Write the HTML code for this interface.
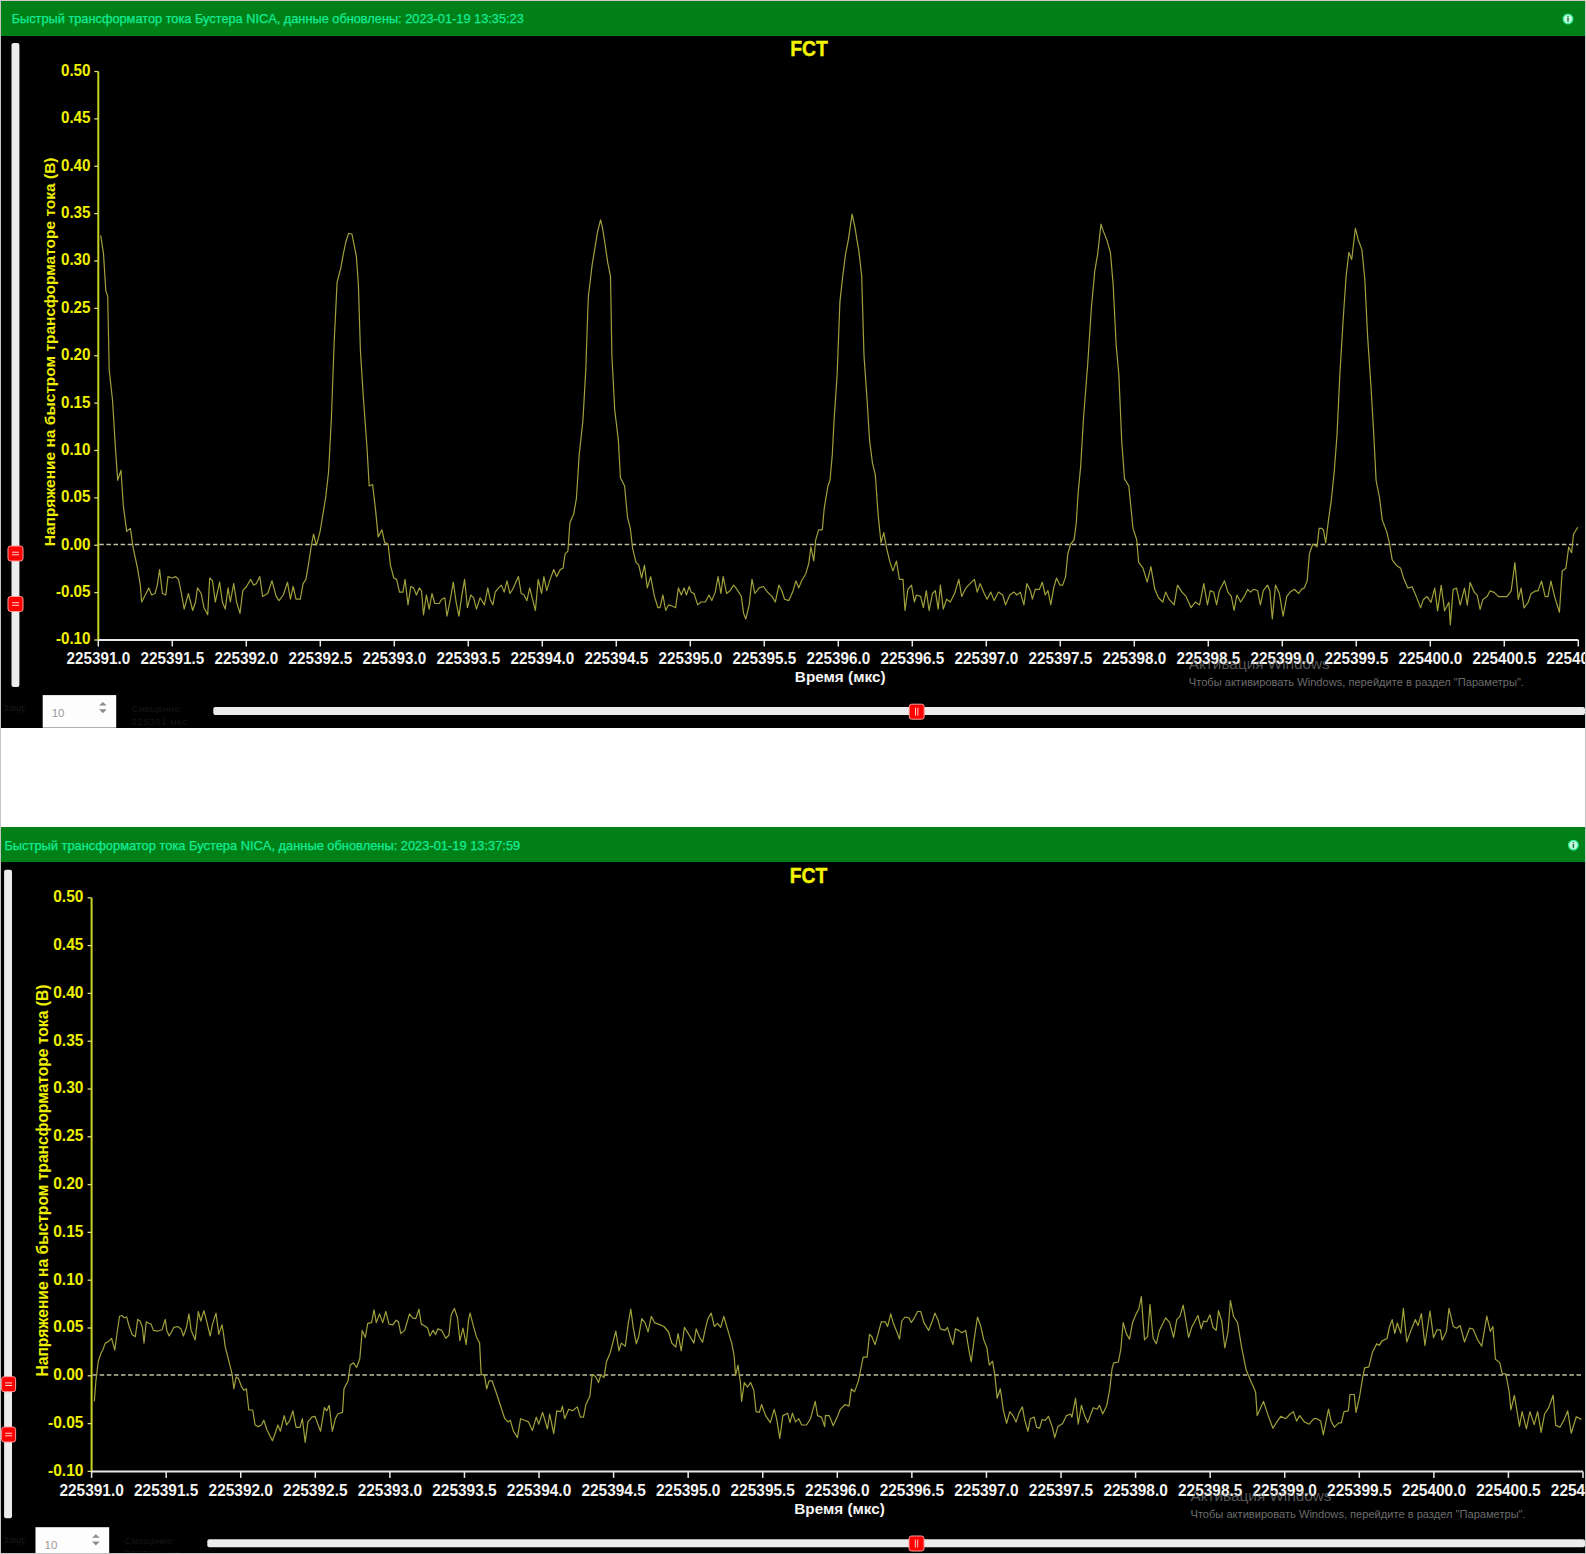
<!DOCTYPE html>
<html><head><meta charset="utf-8"><title>FCT</title>
<style>html,body{margin:0;padding:0;background:#fff;width:1586px;height:1554px;overflow:hidden}</style>
</head><body>
<svg width="1586" height="1554" viewBox="0 0 1586 1554" style="display:block">
<rect x="0" y="0" width="1586" height="1554" fill="#ffffff"/>
<defs><clipPath id="cp1"><rect x="1" y="1" width="1584" height="727"/></clipPath><clipPath id="cp2"><rect x="1" y="827" width="1584" height="726"/></clipPath></defs>
<g clip-path="url(#cp1)">
<rect x="1" y="1" width="1584" height="35" fill="#008016"/>
<rect x="1" y="36" width="1584" height="692" fill="#000"/>
<text x="11.7" y="23.1" font-family="'Liberation Sans', sans-serif" font-size="12.78" fill="#12ec96" stroke="#12ec96" stroke-width="0.25">Быстрый трансформатор тока Бустера NICA, данные обновлены: 2023-01-19 13:35:23</text>
<circle cx="1568" cy="19" r="4.8" fill="#c4ffdc" stroke="#2ef09c" stroke-width="1.3"/><circle cx="1568" cy="16.7" r="0.8" fill="#2d6a45"/><rect x="1567.25" y="17.9" width="1.5" height="3.9" fill="#2d6a45"/>
<text transform="translate(809.0,56.2) scale(0.9,1)" text-anchor="middle" font-family="'Liberation Sans', sans-serif" font-weight="bold" font-size="21.5" fill="#f4f400" stroke="#f4f400" stroke-width="0.4">FCT</text>
<rect x="11.5" y="43" width="7.899999999999999" height="644" rx="2" fill="#ececec"/>
<rect x="8.0" y="546.0" width="15.0" height="15" rx="2.5" fill="#ff0000" stroke="#ff9a9a" stroke-width="1"/>
<rect x="12.0" y="551.7" width="7" height="1" fill="#ffd0d0"/><rect x="12.0" y="554.3" width="7" height="1" fill="#ffd0d0"/>
<rect x="8.0" y="596.5" width="15.0" height="15" rx="2.5" fill="#ff0000" stroke="#ff9a9a" stroke-width="1"/>
<rect x="12.0" y="602.2" width="7" height="1" fill="#ffd0d0"/><rect x="12.0" y="604.8" width="7" height="1" fill="#ffd0d0"/>
<line x1="98.3" y1="71.5" x2="98.3" y2="640" stroke="#c8d020" stroke-width="2"/>
<line x1="94.3" y1="71.50" x2="98.3" y2="71.50" stroke="#d8dc80" stroke-width="1.3"/>
<text transform="translate(90.5,75.90) scale(0.95,1)" text-anchor="end" font-family="'Liberation Sans', sans-serif" font-weight="bold" font-size="16" fill="#eef000">0.50</text>
<line x1="94.3" y1="118.88" x2="98.3" y2="118.88" stroke="#d8dc80" stroke-width="1.3"/>
<text transform="translate(90.5,123.28) scale(0.95,1)" text-anchor="end" font-family="'Liberation Sans', sans-serif" font-weight="bold" font-size="16" fill="#eef000">0.45</text>
<line x1="94.3" y1="166.25" x2="98.3" y2="166.25" stroke="#d8dc80" stroke-width="1.3"/>
<text transform="translate(90.5,170.65) scale(0.95,1)" text-anchor="end" font-family="'Liberation Sans', sans-serif" font-weight="bold" font-size="16" fill="#eef000">0.40</text>
<line x1="94.3" y1="213.63" x2="98.3" y2="213.63" stroke="#d8dc80" stroke-width="1.3"/>
<text transform="translate(90.5,218.03) scale(0.95,1)" text-anchor="end" font-family="'Liberation Sans', sans-serif" font-weight="bold" font-size="16" fill="#eef000">0.35</text>
<line x1="94.3" y1="261.00" x2="98.3" y2="261.00" stroke="#d8dc80" stroke-width="1.3"/>
<text transform="translate(90.5,265.40) scale(0.95,1)" text-anchor="end" font-family="'Liberation Sans', sans-serif" font-weight="bold" font-size="16" fill="#eef000">0.30</text>
<line x1="94.3" y1="308.38" x2="98.3" y2="308.38" stroke="#d8dc80" stroke-width="1.3"/>
<text transform="translate(90.5,312.77) scale(0.95,1)" text-anchor="end" font-family="'Liberation Sans', sans-serif" font-weight="bold" font-size="16" fill="#eef000">0.25</text>
<line x1="94.3" y1="355.75" x2="98.3" y2="355.75" stroke="#d8dc80" stroke-width="1.3"/>
<text transform="translate(90.5,360.15) scale(0.95,1)" text-anchor="end" font-family="'Liberation Sans', sans-serif" font-weight="bold" font-size="16" fill="#eef000">0.20</text>
<line x1="94.3" y1="403.12" x2="98.3" y2="403.12" stroke="#d8dc80" stroke-width="1.3"/>
<text transform="translate(90.5,407.52) scale(0.95,1)" text-anchor="end" font-family="'Liberation Sans', sans-serif" font-weight="bold" font-size="16" fill="#eef000">0.15</text>
<line x1="94.3" y1="450.50" x2="98.3" y2="450.50" stroke="#d8dc80" stroke-width="1.3"/>
<text transform="translate(90.5,454.90) scale(0.95,1)" text-anchor="end" font-family="'Liberation Sans', sans-serif" font-weight="bold" font-size="16" fill="#eef000">0.10</text>
<line x1="94.3" y1="497.88" x2="98.3" y2="497.88" stroke="#d8dc80" stroke-width="1.3"/>
<text transform="translate(90.5,502.27) scale(0.95,1)" text-anchor="end" font-family="'Liberation Sans', sans-serif" font-weight="bold" font-size="16" fill="#eef000">0.05</text>
<line x1="94.3" y1="545.25" x2="98.3" y2="545.25" stroke="#d8dc80" stroke-width="1.3"/>
<text transform="translate(90.5,549.65) scale(0.95,1)" text-anchor="end" font-family="'Liberation Sans', sans-serif" font-weight="bold" font-size="16" fill="#eef000">0.00</text>
<line x1="94.3" y1="592.62" x2="98.3" y2="592.62" stroke="#d8dc80" stroke-width="1.3"/>
<text transform="translate(90.5,597.02) scale(0.95,1)" text-anchor="end" font-family="'Liberation Sans', sans-serif" font-weight="bold" font-size="16" fill="#eef000">-0.05</text>
<line x1="94.3" y1="640.00" x2="98.3" y2="640.00" stroke="#d8dc80" stroke-width="1.3"/>
<text transform="translate(90.5,644.40) scale(0.95,1)" text-anchor="end" font-family="'Liberation Sans', sans-serif" font-weight="bold" font-size="16" fill="#eef000">-0.10</text>
<text transform="translate(54.6,351.9) rotate(-90)" text-anchor="middle" font-family="'Liberation Sans', sans-serif" font-weight="bold" font-size="15.52" fill="#eeee00">Напряжение на быстром трансформаторе тока (В)</text>
<line x1="98.3" y1="640" x2="1578.30" y2="640" stroke="#e8e8e8" stroke-width="2"/>
<line x1="98.30" y1="640" x2="98.30" y2="646.5" stroke="#e8e8e8" stroke-width="1.5"/>
<text transform="translate(98.30,664) scale(0.955,1)" text-anchor="middle" font-family="'Liberation Sans', sans-serif" font-weight="bold" font-size="16" fill="#f4f4f4">225391.0</text>
<line x1="172.30" y1="640" x2="172.30" y2="646.5" stroke="#e8e8e8" stroke-width="1.5"/>
<text transform="translate(172.30,664) scale(0.955,1)" text-anchor="middle" font-family="'Liberation Sans', sans-serif" font-weight="bold" font-size="16" fill="#f4f4f4">225391.5</text>
<line x1="246.30" y1="640" x2="246.30" y2="646.5" stroke="#e8e8e8" stroke-width="1.5"/>
<text transform="translate(246.30,664) scale(0.955,1)" text-anchor="middle" font-family="'Liberation Sans', sans-serif" font-weight="bold" font-size="16" fill="#f4f4f4">225392.0</text>
<line x1="320.30" y1="640" x2="320.30" y2="646.5" stroke="#e8e8e8" stroke-width="1.5"/>
<text transform="translate(320.30,664) scale(0.955,1)" text-anchor="middle" font-family="'Liberation Sans', sans-serif" font-weight="bold" font-size="16" fill="#f4f4f4">225392.5</text>
<line x1="394.30" y1="640" x2="394.30" y2="646.5" stroke="#e8e8e8" stroke-width="1.5"/>
<text transform="translate(394.30,664) scale(0.955,1)" text-anchor="middle" font-family="'Liberation Sans', sans-serif" font-weight="bold" font-size="16" fill="#f4f4f4">225393.0</text>
<line x1="468.30" y1="640" x2="468.30" y2="646.5" stroke="#e8e8e8" stroke-width="1.5"/>
<text transform="translate(468.30,664) scale(0.955,1)" text-anchor="middle" font-family="'Liberation Sans', sans-serif" font-weight="bold" font-size="16" fill="#f4f4f4">225393.5</text>
<line x1="542.30" y1="640" x2="542.30" y2="646.5" stroke="#e8e8e8" stroke-width="1.5"/>
<text transform="translate(542.30,664) scale(0.955,1)" text-anchor="middle" font-family="'Liberation Sans', sans-serif" font-weight="bold" font-size="16" fill="#f4f4f4">225394.0</text>
<line x1="616.30" y1="640" x2="616.30" y2="646.5" stroke="#e8e8e8" stroke-width="1.5"/>
<text transform="translate(616.30,664) scale(0.955,1)" text-anchor="middle" font-family="'Liberation Sans', sans-serif" font-weight="bold" font-size="16" fill="#f4f4f4">225394.5</text>
<line x1="690.30" y1="640" x2="690.30" y2="646.5" stroke="#e8e8e8" stroke-width="1.5"/>
<text transform="translate(690.30,664) scale(0.955,1)" text-anchor="middle" font-family="'Liberation Sans', sans-serif" font-weight="bold" font-size="16" fill="#f4f4f4">225395.0</text>
<line x1="764.30" y1="640" x2="764.30" y2="646.5" stroke="#e8e8e8" stroke-width="1.5"/>
<text transform="translate(764.30,664) scale(0.955,1)" text-anchor="middle" font-family="'Liberation Sans', sans-serif" font-weight="bold" font-size="16" fill="#f4f4f4">225395.5</text>
<line x1="838.30" y1="640" x2="838.30" y2="646.5" stroke="#e8e8e8" stroke-width="1.5"/>
<text transform="translate(838.30,664) scale(0.955,1)" text-anchor="middle" font-family="'Liberation Sans', sans-serif" font-weight="bold" font-size="16" fill="#f4f4f4">225396.0</text>
<line x1="912.30" y1="640" x2="912.30" y2="646.5" stroke="#e8e8e8" stroke-width="1.5"/>
<text transform="translate(912.30,664) scale(0.955,1)" text-anchor="middle" font-family="'Liberation Sans', sans-serif" font-weight="bold" font-size="16" fill="#f4f4f4">225396.5</text>
<line x1="986.30" y1="640" x2="986.30" y2="646.5" stroke="#e8e8e8" stroke-width="1.5"/>
<text transform="translate(986.30,664) scale(0.955,1)" text-anchor="middle" font-family="'Liberation Sans', sans-serif" font-weight="bold" font-size="16" fill="#f4f4f4">225397.0</text>
<line x1="1060.30" y1="640" x2="1060.30" y2="646.5" stroke="#e8e8e8" stroke-width="1.5"/>
<text transform="translate(1060.30,664) scale(0.955,1)" text-anchor="middle" font-family="'Liberation Sans', sans-serif" font-weight="bold" font-size="16" fill="#f4f4f4">225397.5</text>
<line x1="1134.30" y1="640" x2="1134.30" y2="646.5" stroke="#e8e8e8" stroke-width="1.5"/>
<text transform="translate(1134.30,664) scale(0.955,1)" text-anchor="middle" font-family="'Liberation Sans', sans-serif" font-weight="bold" font-size="16" fill="#f4f4f4">225398.0</text>
<line x1="1208.30" y1="640" x2="1208.30" y2="646.5" stroke="#e8e8e8" stroke-width="1.5"/>
<text transform="translate(1208.30,664) scale(0.955,1)" text-anchor="middle" font-family="'Liberation Sans', sans-serif" font-weight="bold" font-size="16" fill="#f4f4f4">225398.5</text>
<line x1="1282.30" y1="640" x2="1282.30" y2="646.5" stroke="#e8e8e8" stroke-width="1.5"/>
<text transform="translate(1282.30,664) scale(0.955,1)" text-anchor="middle" font-family="'Liberation Sans', sans-serif" font-weight="bold" font-size="16" fill="#f4f4f4">225399.0</text>
<line x1="1356.30" y1="640" x2="1356.30" y2="646.5" stroke="#e8e8e8" stroke-width="1.5"/>
<text transform="translate(1356.30,664) scale(0.955,1)" text-anchor="middle" font-family="'Liberation Sans', sans-serif" font-weight="bold" font-size="16" fill="#f4f4f4">225399.5</text>
<line x1="1430.30" y1="640" x2="1430.30" y2="646.5" stroke="#e8e8e8" stroke-width="1.5"/>
<text transform="translate(1430.30,664) scale(0.955,1)" text-anchor="middle" font-family="'Liberation Sans', sans-serif" font-weight="bold" font-size="16" fill="#f4f4f4">225400.0</text>
<line x1="1504.30" y1="640" x2="1504.30" y2="646.5" stroke="#e8e8e8" stroke-width="1.5"/>
<text transform="translate(1504.30,664) scale(0.955,1)" text-anchor="middle" font-family="'Liberation Sans', sans-serif" font-weight="bold" font-size="16" fill="#f4f4f4">225400.5</text>
<line x1="1578.30" y1="640" x2="1578.30" y2="646.5" stroke="#e8e8e8" stroke-width="1.5"/>
<text transform="translate(1578.30,664) scale(0.955,1)" text-anchor="middle" font-family="'Liberation Sans', sans-serif" font-weight="bold" font-size="16" fill="#f4f4f4">225401.0</text>
<text x="840.2" y="681.7" text-anchor="middle" font-family="'Liberation Sans', sans-serif" font-weight="bold" font-size="15.3" fill="#f4f4f4">Время (мкс)</text>
<line x1="99.3" y1="544.5" x2="1578.30" y2="544.5" stroke="#c0c0a0" stroke-width="1.6" stroke-dasharray="4.5,2.6"/>
<polyline points="100.7,235.4 103.5,253.8 105.8,290.6 107.7,296.3 109.2,369.9 112.6,401.0 115.4,447.7 117.7,480.3 121.0,470.4 123.3,505.8 126.7,531.3 130.4,528.4 133.2,548.2 137.5,568.1 140.3,585.1 141.7,602.0 146.0,593.5 148.8,587.9 151.6,595.0 155.0,593.5 157.3,585.1 159.6,569.5 162.4,593.5 165.8,595.0 168.0,576.6 172.0,578.0 175.7,576.6 178.5,579.4 181.4,593.5 184.2,609.1 188.4,593.5 192.7,610.5 195.5,602.0 197.5,587.9 201.2,593.5 204.0,607.7 207.7,614.8 209.7,578.0 212.5,580.8 215.3,602.0 219.6,582.2 222.4,602.0 225.2,609.1 228.1,587.9 230.3,602.0 233.7,583.6 236.6,602.0 240.0,613.4 242.8,590.7 246.5,586.5 250.7,579.4 253.6,585.1 256.4,583.6 259.8,576.6 262.6,596.4 267.7,593.5 272.0,580.8 276.2,596.4 279.0,600.6 283.3,595.0 287.5,582.2 290.4,599.2 293.2,586.5 296.0,599.2 300.3,599.2 303.1,583.6 305.9,579.4 308.8,562.4 311.6,544.0 313.6,534.1 316.4,545.4 320.1,531.3 322.9,514.3 325.7,497.3 328.6,471.8 331.4,418.0 334.2,341.6 337.1,282.1 340.8,268.0 342.8,256.6 345.7,242.5 348.5,233.4 351.9,234.0 354.2,245.3 356.4,256.6 358.4,284.9 360.4,350.1 363.2,395.4 366.9,446.3 369.2,486.0 372.6,484.5 375.4,508.6 378.2,536.9 381.9,529.8 384.7,542.6 388.1,544.0 390.4,565.2 393.8,578.0 396.6,579.4 399.5,592.1 402.9,592.1 405.1,579.4 408.0,604.9 410.8,586.5 413.6,587.9 416.4,595.0 419.3,587.9 421.5,590.7 423.5,614.8 426.4,595.0 429.2,609.1 432.0,593.5 434.8,603.5 439.1,603.5 441.9,599.2 444.8,597.8 447.0,616.2 450.4,599.2 453.3,582.2 456.1,602.0 458.9,616.2 461.7,596.4 464.6,579.4 467.4,607.7 470.8,595.0 473.6,597.8 476.5,609.1 480.1,597.8 484.4,604.9 487.8,587.9 490.1,599.2 492.9,604.9 495.2,592.1 498.6,587.9 501.4,585.1 504.2,592.1 507.0,580.8 509.9,593.5 512.7,589.3 518.4,576.6 521.2,593.5 524.0,595.0 526.9,600.6 529.7,587.9 532.5,599.2 535.4,610.5 538.2,579.4 541.6,593.5 543.9,576.6 546.7,590.7 550.1,579.4 553.8,569.5 556.6,576.6 560.3,569.5 563.1,568.1 565.1,553.9 567.9,551.1 569.9,522.8 573.6,514.3 576.4,498.7 579.2,454.8 582.9,420.8 585.8,369.9 587.7,313.3 588.4,296.3 592.1,265.1 594.9,248.1 597.7,231.1 600.6,219.8 602.6,228.3 604.8,242.5 607.7,262.3 610.5,276.4 611.9,355.7 614.7,409.5 618.4,440.7 620.4,477.5 624.6,486.0 627.5,517.1 630.3,528.4 632.6,548.2 636.0,562.4 638.8,565.2 641.6,578.0 644.5,565.2 647.3,587.9 650.7,576.6 654.4,596.4 658.0,607.7 660.0,607.7 662.9,595.0 665.7,610.5 668.5,604.9 672.8,606.3 675.6,607.7 678.4,587.9 681.3,595.0 684.1,587.9 686.4,595.0 689.2,586.5 691.2,592.1 694.0,593.5 697.7,604.9 701.1,602.0 705.3,602.0 709.0,595.0 711.8,600.6 715.2,592.1 718.1,576.6 720.9,593.5 723.2,576.6 726.6,593.5 730.0,590.7 733.6,585.1 737.9,590.7 741.3,596.4 743.6,613.4 745.8,619.0 749.2,604.9 752.0,579.4 754.9,593.5 759.1,587.9 763.4,586.5 767.6,592.1 771.9,596.4 775.3,602.0 778.9,585.1 781.8,590.7 784.6,599.2 788.9,600.6 793.1,590.7 795.9,580.8 798.8,587.9 801.6,580.8 805.8,573.7 808.7,563.8 810.9,546.8 813.8,561.0 815.7,539.8 818.6,529.8 822.3,529.8 824.2,508.6 827.9,486.0 830.0,480.3 832.3,454.8 834.2,418.0 837.1,375.5 839.9,301.9 842.7,276.4 845.6,253.8 848.4,239.6 852.1,214.2 854.9,226.9 856.9,239.6 858.9,251.0 861.7,276.4 864.0,355.7 866.8,395.4 869.6,440.7 872.5,463.3 875.3,474.6 878.1,514.3 881.0,542.6 883.8,532.7 886.6,548.2 890.0,562.4 892.9,570.9 896.5,561.0 899.4,579.4 903.0,579.4 905.0,610.5 907.9,589.3 911.5,585.1 914.4,602.0 916.4,595.0 920.6,596.4 923.4,607.7 926.3,590.7 929.1,610.5 932.5,593.5 935.3,590.7 938.2,609.1 940.4,585.1 943.3,609.1 946.6,599.2 950.3,602.0 954.6,593.5 958.8,579.4 961.7,596.4 965.9,587.9 970.1,583.6 974.4,579.4 977.2,592.1 980.1,583.6 984.3,593.5 987.1,599.2 990.8,592.1 994.2,600.6 998.5,592.1 1002.7,595.0 1005.5,604.9 1009.8,595.0 1014.0,592.1 1016.9,595.0 1020.3,592.1 1023.9,604.9 1026.8,583.6 1030.5,590.7 1032.4,599.2 1035.3,589.3 1039.5,589.3 1042.3,582.2 1045.2,595.0 1048.0,590.7 1050.8,604.9 1053.7,587.9 1056.5,578.0 1059.9,585.1 1062.7,585.1 1065.6,576.6 1067.8,553.9 1070.7,544.0 1074.1,539.8 1076.3,522.8 1078.0,494.5 1080.7,466.1 1083.5,418.0 1087.7,364.2 1091.4,307.6 1094.8,270.8 1097.7,253.8 1101.0,224.1 1103.3,231.1 1106.7,239.6 1110.4,252.4 1113.2,284.9 1116.1,344.4 1118.9,375.5 1121.7,440.7 1124.5,478.9 1128.8,486.0 1133.0,528.4 1136.7,539.8 1138.7,562.4 1143.0,568.1 1147.2,582.2 1150.9,566.6 1154.8,589.3 1158.5,597.8 1162.8,602.0 1165.6,592.1 1169.0,599.2 1174.1,604.9 1177.5,585.1 1182.0,592.1 1186.0,596.4 1191.1,607.7 1195.3,602.0 1199.6,604.9 1203.8,583.6 1207.5,604.9 1210.3,590.7 1213.7,592.1 1216.6,604.9 1219.4,590.7 1224.5,580.8 1227.9,592.1 1231.3,596.4 1234.1,610.5 1236.9,595.0 1240.6,602.0 1244.3,596.4 1247.7,589.3 1250.5,592.1 1253.9,589.3 1257.6,590.7 1260.4,604.9 1263.3,590.7 1267.5,585.1 1269.8,590.7 1272.3,619.0 1275.5,585.1 1279.4,593.5 1283.1,616.2 1286.8,596.4 1290.2,592.1 1294.4,589.3 1298.7,593.5 1301.5,589.3 1304.3,587.9 1307.2,580.8 1309.4,553.9 1312.8,544.0 1317.1,546.8 1319.1,528.4 1321.9,528.4 1323.4,530.0 1325.7,542.8 1328.5,520.1 1331.3,500.3 1334.2,472.0 1337.0,435.1 1339.8,375.6 1343.2,319.0 1346.1,276.5 1348.9,252.4 1351.7,259.5 1355.4,228.3 1358.2,239.7 1361.9,249.6 1364.8,279.3 1367.6,336.0 1371.0,387.0 1373.8,435.1 1376.1,480.5 1379.5,497.5 1382.3,520.1 1386.6,531.4 1389.4,542.8 1392.2,559.8 1396.5,565.4 1400.7,568.3 1403.6,578.2 1407.8,588.1 1412.1,586.7 1416.3,596.6 1420.6,607.9 1423.4,599.4 1427.1,596.6 1431.0,602.3 1434.7,588.1 1437.6,610.8 1441.2,585.3 1444.6,610.8 1448.9,602.3 1450.3,624.9 1453.1,589.5 1456.5,588.1 1460.2,605.1 1464.5,588.1 1467.3,605.1 1470.1,582.4 1474.4,592.4 1477.2,595.2 1480.1,609.3 1482.9,599.4 1487.1,596.6 1490.0,590.9 1494.2,592.4 1498.5,596.6 1503.6,596.6 1507.0,596.6 1511.2,590.9 1514.9,562.6 1518.3,599.4 1521.1,588.1 1524.0,607.9 1528.2,602.3 1531.0,593.8 1535.3,590.9 1538.1,590.9 1541.5,581.0 1545.2,596.6 1548.0,596.6 1550.9,581.0 1554.6,596.6 1559.4,612.2 1562.2,571.1 1565.9,568.3 1568.7,547.0 1571.6,552.7 1573.5,534.3 1577.8,527.2" fill="none" stroke="#a0a03c" stroke-width="1.2" stroke-linejoin="round"/>
<text x="1188.8" y="669" font-family="'Liberation Sans', sans-serif" font-size="15.3" fill="#9a9a9a" opacity="0.55">Активация Windows</text>
<text x="1188.8" y="686" font-family="'Liberation Sans', sans-serif" font-size="11.1" fill="#9a9a9a" opacity="0.7">Чтобы активировать Windows, перейдите в раздел "Параметры".</text>
<text x="3" y="711.1" font-family="'Liberation Sans', sans-serif" font-size="9" fill="#1a1a1a">Зонд:</text>
<rect x="42.7" y="695.1" width="73.5" height="32.60000000000002" fill="#fdfdfd"/>
<text x="51.7" y="716.6" font-family="'Liberation Sans', sans-serif" font-size="11.5" fill="#9a9a9a">10</text>
<path d="M99.10000000000001,705.6 L102.9,702.1 L106.7,705.6 Z M99.10000000000001,709.3000000000001 L102.9,713.3000000000001 L106.7,709.3000000000001 Z" fill="#8a8a8a"/>
<text x="131.7" y="711.6" font-family="'Liberation Sans', sans-serif" font-size="9.5" fill="#161616">Смещение:</text>
<text x="131.7" y="724.6" font-family="'Liberation Sans', sans-serif" font-size="9.5" letter-spacing="0.6" fill="#161616">225391 мкс</text>
<rect x="213.3" y="707" width="1371.7" height="8" rx="2" fill="#ececec"/>
<rect x="909.2" y="704.2" width="15" height="15" rx="2.5" fill="#ff0000" stroke="#ff9a9a" stroke-width="1"/>
<rect x="915.0" y="707.7" width="1" height="8" fill="#ffd0d0"/><rect x="917.4000000000001" y="707.7" width="1" height="8" fill="#ffd0d0"/>
</g>
<g clip-path="url(#cp2)">
<rect x="1" y="827" width="1584" height="35" fill="#008016"/>
<rect x="1" y="862" width="1584" height="691" fill="#000"/>
<text x="4.4" y="849.8" font-family="'Liberation Sans', sans-serif" font-size="12.86" fill="#12ec96" stroke="#12ec96" stroke-width="0.25">Быстрый трансформатор тока Бустера NICA, данные обновлены: 2023-01-19 13:37:59</text>
<circle cx="1573.4" cy="845.1" r="4.8" fill="#c4ffdc" stroke="#2ef09c" stroke-width="1.3"/><circle cx="1573.4" cy="842.8000000000001" r="0.8" fill="#2d6a45"/><rect x="1572.65" y="844.0" width="1.5" height="3.9" fill="#2d6a45"/>
<text transform="translate(808.6,882.5) scale(0.9,1)" text-anchor="middle" font-family="'Liberation Sans', sans-serif" font-weight="bold" font-size="21.5" fill="#f4f400" stroke="#f4f400" stroke-width="0.4">FCT</text>
<rect x="4.1" y="869.7" width="7.9" height="648.5" rx="2" fill="#ececec"/>
<rect x="1.6" y="1376.7" width="14.000000000000002" height="15" rx="2.5" fill="#ff0000" stroke="#ff9a9a" stroke-width="1"/>
<rect x="5.100000000000001" y="1382.4" width="7" height="1" fill="#ffd0d0"/><rect x="5.100000000000001" y="1385.0" width="7" height="1" fill="#ffd0d0"/>
<rect x="1.6" y="1427.0" width="14.000000000000002" height="15" rx="2.5" fill="#ff0000" stroke="#ff9a9a" stroke-width="1"/>
<rect x="5.100000000000001" y="1432.7" width="7" height="1" fill="#ffd0d0"/><rect x="5.100000000000001" y="1435.3" width="7" height="1" fill="#ffd0d0"/>
<line x1="91.6" y1="897.8" x2="91.6" y2="1471.4" stroke="#c8d020" stroke-width="2"/>
<line x1="87.6" y1="897.80" x2="91.6" y2="897.80" stroke="#d8dc80" stroke-width="1.3"/>
<text transform="translate(83.39999999999999,902.20) scale(0.97,1)" text-anchor="end" font-family="'Liberation Sans', sans-serif" font-weight="bold" font-size="16" fill="#eef000">0.50</text>
<line x1="87.6" y1="945.60" x2="91.6" y2="945.60" stroke="#d8dc80" stroke-width="1.3"/>
<text transform="translate(83.39999999999999,950.00) scale(0.97,1)" text-anchor="end" font-family="'Liberation Sans', sans-serif" font-weight="bold" font-size="16" fill="#eef000">0.45</text>
<line x1="87.6" y1="993.40" x2="91.6" y2="993.40" stroke="#d8dc80" stroke-width="1.3"/>
<text transform="translate(83.39999999999999,997.80) scale(0.97,1)" text-anchor="end" font-family="'Liberation Sans', sans-serif" font-weight="bold" font-size="16" fill="#eef000">0.40</text>
<line x1="87.6" y1="1041.20" x2="91.6" y2="1041.20" stroke="#d8dc80" stroke-width="1.3"/>
<text transform="translate(83.39999999999999,1045.60) scale(0.97,1)" text-anchor="end" font-family="'Liberation Sans', sans-serif" font-weight="bold" font-size="16" fill="#eef000">0.35</text>
<line x1="87.6" y1="1089.00" x2="91.6" y2="1089.00" stroke="#d8dc80" stroke-width="1.3"/>
<text transform="translate(83.39999999999999,1093.40) scale(0.97,1)" text-anchor="end" font-family="'Liberation Sans', sans-serif" font-weight="bold" font-size="16" fill="#eef000">0.30</text>
<line x1="87.6" y1="1136.80" x2="91.6" y2="1136.80" stroke="#d8dc80" stroke-width="1.3"/>
<text transform="translate(83.39999999999999,1141.20) scale(0.97,1)" text-anchor="end" font-family="'Liberation Sans', sans-serif" font-weight="bold" font-size="16" fill="#eef000">0.25</text>
<line x1="87.6" y1="1184.60" x2="91.6" y2="1184.60" stroke="#d8dc80" stroke-width="1.3"/>
<text transform="translate(83.39999999999999,1189.00) scale(0.97,1)" text-anchor="end" font-family="'Liberation Sans', sans-serif" font-weight="bold" font-size="16" fill="#eef000">0.20</text>
<line x1="87.6" y1="1232.40" x2="91.6" y2="1232.40" stroke="#d8dc80" stroke-width="1.3"/>
<text transform="translate(83.39999999999999,1236.80) scale(0.97,1)" text-anchor="end" font-family="'Liberation Sans', sans-serif" font-weight="bold" font-size="16" fill="#eef000">0.15</text>
<line x1="87.6" y1="1280.20" x2="91.6" y2="1280.20" stroke="#d8dc80" stroke-width="1.3"/>
<text transform="translate(83.39999999999999,1284.60) scale(0.97,1)" text-anchor="end" font-family="'Liberation Sans', sans-serif" font-weight="bold" font-size="16" fill="#eef000">0.10</text>
<line x1="87.6" y1="1328.00" x2="91.6" y2="1328.00" stroke="#d8dc80" stroke-width="1.3"/>
<text transform="translate(83.39999999999999,1332.40) scale(0.97,1)" text-anchor="end" font-family="'Liberation Sans', sans-serif" font-weight="bold" font-size="16" fill="#eef000">0.05</text>
<line x1="87.6" y1="1375.80" x2="91.6" y2="1375.80" stroke="#d8dc80" stroke-width="1.3"/>
<text transform="translate(83.39999999999999,1380.20) scale(0.97,1)" text-anchor="end" font-family="'Liberation Sans', sans-serif" font-weight="bold" font-size="16" fill="#eef000">0.00</text>
<line x1="87.6" y1="1423.60" x2="91.6" y2="1423.60" stroke="#d8dc80" stroke-width="1.3"/>
<text transform="translate(83.39999999999999,1428.00) scale(0.97,1)" text-anchor="end" font-family="'Liberation Sans', sans-serif" font-weight="bold" font-size="16" fill="#eef000">-0.05</text>
<line x1="87.6" y1="1471.40" x2="91.6" y2="1471.40" stroke="#d8dc80" stroke-width="1.3"/>
<text transform="translate(83.39999999999999,1475.80) scale(0.97,1)" text-anchor="end" font-family="'Liberation Sans', sans-serif" font-weight="bold" font-size="16" fill="#eef000">-0.10</text>
<text transform="translate(47.5,1180.6) rotate(-90)" text-anchor="middle" font-family="'Liberation Sans', sans-serif" font-weight="bold" font-size="15.65" fill="#eeee00">Напряжение на быстром трансформаторе тока (В)</text>
<line x1="91.6" y1="1471.4" x2="1583.00" y2="1471.4" stroke="#e8e8e8" stroke-width="2"/>
<line x1="91.60" y1="1471.4" x2="91.60" y2="1477.9" stroke="#e8e8e8" stroke-width="1.5"/>
<text transform="translate(91.60,1495.5) scale(0.965,1)" text-anchor="middle" font-family="'Liberation Sans', sans-serif" font-weight="bold" font-size="16" fill="#f4f4f4">225391.0</text>
<line x1="166.17" y1="1471.4" x2="166.17" y2="1477.9" stroke="#e8e8e8" stroke-width="1.5"/>
<text transform="translate(166.17,1495.5) scale(0.965,1)" text-anchor="middle" font-family="'Liberation Sans', sans-serif" font-weight="bold" font-size="16" fill="#f4f4f4">225391.5</text>
<line x1="240.74" y1="1471.4" x2="240.74" y2="1477.9" stroke="#e8e8e8" stroke-width="1.5"/>
<text transform="translate(240.74,1495.5) scale(0.965,1)" text-anchor="middle" font-family="'Liberation Sans', sans-serif" font-weight="bold" font-size="16" fill="#f4f4f4">225392.0</text>
<line x1="315.31" y1="1471.4" x2="315.31" y2="1477.9" stroke="#e8e8e8" stroke-width="1.5"/>
<text transform="translate(315.31,1495.5) scale(0.965,1)" text-anchor="middle" font-family="'Liberation Sans', sans-serif" font-weight="bold" font-size="16" fill="#f4f4f4">225392.5</text>
<line x1="389.88" y1="1471.4" x2="389.88" y2="1477.9" stroke="#e8e8e8" stroke-width="1.5"/>
<text transform="translate(389.88,1495.5) scale(0.965,1)" text-anchor="middle" font-family="'Liberation Sans', sans-serif" font-weight="bold" font-size="16" fill="#f4f4f4">225393.0</text>
<line x1="464.45" y1="1471.4" x2="464.45" y2="1477.9" stroke="#e8e8e8" stroke-width="1.5"/>
<text transform="translate(464.45,1495.5) scale(0.965,1)" text-anchor="middle" font-family="'Liberation Sans', sans-serif" font-weight="bold" font-size="16" fill="#f4f4f4">225393.5</text>
<line x1="539.02" y1="1471.4" x2="539.02" y2="1477.9" stroke="#e8e8e8" stroke-width="1.5"/>
<text transform="translate(539.02,1495.5) scale(0.965,1)" text-anchor="middle" font-family="'Liberation Sans', sans-serif" font-weight="bold" font-size="16" fill="#f4f4f4">225394.0</text>
<line x1="613.59" y1="1471.4" x2="613.59" y2="1477.9" stroke="#e8e8e8" stroke-width="1.5"/>
<text transform="translate(613.59,1495.5) scale(0.965,1)" text-anchor="middle" font-family="'Liberation Sans', sans-serif" font-weight="bold" font-size="16" fill="#f4f4f4">225394.5</text>
<line x1="688.16" y1="1471.4" x2="688.16" y2="1477.9" stroke="#e8e8e8" stroke-width="1.5"/>
<text transform="translate(688.16,1495.5) scale(0.965,1)" text-anchor="middle" font-family="'Liberation Sans', sans-serif" font-weight="bold" font-size="16" fill="#f4f4f4">225395.0</text>
<line x1="762.73" y1="1471.4" x2="762.73" y2="1477.9" stroke="#e8e8e8" stroke-width="1.5"/>
<text transform="translate(762.73,1495.5) scale(0.965,1)" text-anchor="middle" font-family="'Liberation Sans', sans-serif" font-weight="bold" font-size="16" fill="#f4f4f4">225395.5</text>
<line x1="837.30" y1="1471.4" x2="837.30" y2="1477.9" stroke="#e8e8e8" stroke-width="1.5"/>
<text transform="translate(837.30,1495.5) scale(0.965,1)" text-anchor="middle" font-family="'Liberation Sans', sans-serif" font-weight="bold" font-size="16" fill="#f4f4f4">225396.0</text>
<line x1="911.87" y1="1471.4" x2="911.87" y2="1477.9" stroke="#e8e8e8" stroke-width="1.5"/>
<text transform="translate(911.87,1495.5) scale(0.965,1)" text-anchor="middle" font-family="'Liberation Sans', sans-serif" font-weight="bold" font-size="16" fill="#f4f4f4">225396.5</text>
<line x1="986.44" y1="1471.4" x2="986.44" y2="1477.9" stroke="#e8e8e8" stroke-width="1.5"/>
<text transform="translate(986.44,1495.5) scale(0.965,1)" text-anchor="middle" font-family="'Liberation Sans', sans-serif" font-weight="bold" font-size="16" fill="#f4f4f4">225397.0</text>
<line x1="1061.01" y1="1471.4" x2="1061.01" y2="1477.9" stroke="#e8e8e8" stroke-width="1.5"/>
<text transform="translate(1061.01,1495.5) scale(0.965,1)" text-anchor="middle" font-family="'Liberation Sans', sans-serif" font-weight="bold" font-size="16" fill="#f4f4f4">225397.5</text>
<line x1="1135.58" y1="1471.4" x2="1135.58" y2="1477.9" stroke="#e8e8e8" stroke-width="1.5"/>
<text transform="translate(1135.58,1495.5) scale(0.965,1)" text-anchor="middle" font-family="'Liberation Sans', sans-serif" font-weight="bold" font-size="16" fill="#f4f4f4">225398.0</text>
<line x1="1210.15" y1="1471.4" x2="1210.15" y2="1477.9" stroke="#e8e8e8" stroke-width="1.5"/>
<text transform="translate(1210.15,1495.5) scale(0.965,1)" text-anchor="middle" font-family="'Liberation Sans', sans-serif" font-weight="bold" font-size="16" fill="#f4f4f4">225398.5</text>
<line x1="1284.72" y1="1471.4" x2="1284.72" y2="1477.9" stroke="#e8e8e8" stroke-width="1.5"/>
<text transform="translate(1284.72,1495.5) scale(0.965,1)" text-anchor="middle" font-family="'Liberation Sans', sans-serif" font-weight="bold" font-size="16" fill="#f4f4f4">225399.0</text>
<line x1="1359.29" y1="1471.4" x2="1359.29" y2="1477.9" stroke="#e8e8e8" stroke-width="1.5"/>
<text transform="translate(1359.29,1495.5) scale(0.965,1)" text-anchor="middle" font-family="'Liberation Sans', sans-serif" font-weight="bold" font-size="16" fill="#f4f4f4">225399.5</text>
<line x1="1433.86" y1="1471.4" x2="1433.86" y2="1477.9" stroke="#e8e8e8" stroke-width="1.5"/>
<text transform="translate(1433.86,1495.5) scale(0.965,1)" text-anchor="middle" font-family="'Liberation Sans', sans-serif" font-weight="bold" font-size="16" fill="#f4f4f4">225400.0</text>
<line x1="1508.43" y1="1471.4" x2="1508.43" y2="1477.9" stroke="#e8e8e8" stroke-width="1.5"/>
<text transform="translate(1508.43,1495.5) scale(0.965,1)" text-anchor="middle" font-family="'Liberation Sans', sans-serif" font-weight="bold" font-size="16" fill="#f4f4f4">225400.5</text>
<line x1="1583.00" y1="1471.4" x2="1583.00" y2="1477.9" stroke="#e8e8e8" stroke-width="1.5"/>
<text transform="translate(1583.00,1495.5) scale(0.965,1)" text-anchor="middle" font-family="'Liberation Sans', sans-serif" font-weight="bold" font-size="16" fill="#f4f4f4">225401.0</text>
<text x="839.6" y="1513.6" text-anchor="middle" font-family="'Liberation Sans', sans-serif" font-weight="bold" font-size="15.3" fill="#f4f4f4">Время (мкс)</text>
<line x1="92.6" y1="1375" x2="1583.00" y2="1375" stroke="#c0c0a0" stroke-width="1.6" stroke-dasharray="4.5,2.6"/>
<polyline points="94.3,1401.4 95.9,1380.9 98.2,1362.0 100.6,1354.1 103.0,1349.4 105.3,1343.1 108.5,1341.5 111.6,1338.3 114.8,1350.1 117.2,1332.0 119.5,1316.3 121.9,1315.5 124.3,1317.8 126.6,1317.0 129.0,1325.7 132.1,1334.4 135.3,1336.7 137.7,1319.4 140.0,1321.0 142.4,1327.3 144.0,1343.1 146.3,1321.8 148.7,1323.3 151.1,1324.1 153.4,1330.4 157.4,1331.2 162.1,1329.7 165.2,1319.4 166.8,1330.4 169.2,1336.0 171.5,1332.0 173.9,1327.3 177.8,1326.5 181.0,1328.9 183.4,1336.0 186.5,1327.3 188.9,1313.9 191.2,1330.4 195.2,1339.9 198.3,1311.5 200.7,1321.0 203.9,1310.7 206.2,1319.4 210.2,1336.0 212.5,1324.1 216.0,1313.1 218.8,1334.4 222.0,1324.9 223.6,1334.4 225.1,1346.2 228.3,1358.8 230.7,1368.3 232.2,1374.6 233.8,1388.8 236.2,1376.9 238.5,1378.5 241.7,1387.2 244.1,1390.3 246.4,1388.8 248.8,1410.0 252.7,1410.0 255.1,1425.0 258.2,1426.6 261.4,1425.0 263.8,1420.3 266.9,1429.7 272.4,1440.8 274.8,1434.5 277.9,1425.0 280.3,1431.3 284.2,1415.6 286.6,1425.0 289.8,1420.3 292.9,1410.8 296.1,1427.4 300.0,1427.4 302.4,1418.7 305.2,1442.4 307.9,1421.9 311.8,1417.1 315.0,1416.3 320.5,1431.3 324.4,1407.7 326.8,1410.8 329.2,1405.3 332.3,1431.3 335.4,1418.7 337.7,1414.0 342.5,1412.4 344.0,1388.8 348.0,1380.9 350.3,1365.1 353.5,1362.8 356.6,1367.5 359.8,1358.8 362.2,1330.4 365.3,1337.5 367.7,1323.3 371.6,1322.6 374.0,1309.9 376.3,1322.6 379.5,1313.9 382.7,1322.6 385.8,1311.5 389.0,1324.1 392.9,1324.9 396.1,1320.2 398.4,1321.8 400.8,1333.6 404.7,1330.4 409.5,1313.9 412.6,1317.8 415.8,1318.6 418.9,1309.2 421.3,1324.1 424.4,1325.7 427.6,1328.1 429.9,1336.0 433.1,1330.4 435.5,1334.4 437.8,1328.9 441.8,1330.4 445.7,1338.3 448.9,1335.2 451.2,1314.7 454.4,1308.4 457.5,1317.8 459.9,1340.7 463.0,1328.1 466.2,1344.6 468.6,1319.4 470.1,1313.1 473.3,1325.7 476.4,1336.7 479.6,1343.1 481.2,1374.6 484.3,1374.6 486.7,1388.8 489.1,1380.9 492.2,1380.9 495.4,1390.3 500.1,1404.5 504.8,1418.7 508.0,1421.9 510.3,1420.3 513.5,1431.3 517.4,1437.6 520.6,1418.7 524.5,1420.3 528.5,1421.9 532.4,1430.5 536.3,1417.1 538.7,1424.2 542.6,1412.4 547.4,1429.0 549.7,1414.0 553.7,1433.7 556.8,1410.8 560.8,1411.6 562.4,1406.1 564.7,1418.7 568.7,1409.3 572.6,1410.8 577.3,1406.9 580.4,1417.1 583.5,1417.1 585.9,1404.5 589.8,1396.6 592.2,1374.6 595.3,1376.2 598.5,1382.5 600.9,1374.6 604.0,1377.7 606.4,1362.0 610.3,1352.5 612.7,1343.1 615.8,1331.2 619.0,1350.9 621.3,1343.1 625.3,1346.2 628.4,1322.6 630.8,1309.2 633.2,1327.3 636.3,1343.8 638.7,1336.7 641.8,1318.6 645.0,1322.6 648.1,1332.0 651.3,1316.3 654.5,1322.6 658.4,1324.1 663.9,1326.5 668.6,1332.0 671.8,1343.1 675.7,1347.0 678.1,1333.6 681.2,1350.9 684.4,1327.3 688.3,1333.6 693.9,1343.1 696.2,1328.9 699.4,1336.7 702.5,1342.3 705.7,1327.3 708.0,1318.6 711.2,1313.1 714.3,1326.5 717.5,1323.3 720.7,1327.3 723.8,1316.3 727.0,1327.3 731.7,1343.1 734.1,1355.7 735.6,1375.4 738.0,1365.1 740.4,1382.5 741.6,1401.4 744.3,1382.5 747.5,1387.2 750.6,1382.5 753.8,1390.3 756.1,1411.6 759.3,1412.4 761.6,1404.5 765.6,1415.6 770.3,1422.7 774.2,1409.3 776.6,1418.7 779.8,1438.4 782.9,1415.6 787.6,1413.2 790.0,1422.7 792.4,1413.2 795.5,1421.9 798.7,1418.7 801.8,1425.0 806.6,1425.0 810.5,1418.7 815.2,1401.4 817.6,1415.6 821.5,1417.1 824.7,1426.6 825.4,1415.6 829.3,1415.6 833.2,1425.8 837.2,1417.1 840.3,1409.3 845.1,1404.5 849.0,1406.1 851.4,1388.8 854.5,1391.9 858.5,1380.9 860.0,1373.0 863.2,1357.2 867.1,1357.2 869.5,1334.4 871.9,1336.7 875.0,1344.6 878.2,1333.6 881.3,1321.8 885.3,1321.8 887.6,1326.5 890.8,1313.9 893.1,1322.6 896.3,1330.4 899.5,1339.1 901.8,1321.0 905.0,1317.0 908.9,1317.8 911.3,1322.6 914.4,1317.8 917.6,1311.5 920.7,1311.5 923.9,1322.6 928.6,1330.4 931.8,1322.6 934.9,1313.1 938.1,1320.2 940.4,1328.9 945.2,1330.4 947.5,1327.3 950.7,1338.3 953.0,1344.6 955.4,1328.9 958.6,1330.4 961.7,1332.8 965.7,1330.4 968.8,1349.4 971.2,1362.0 974.3,1338.3 977.5,1317.0 980.6,1325.7 983.8,1339.9 986.9,1347.8 989.3,1365.1 992.5,1361.2 994.8,1374.6 997.2,1398.2 1000.3,1388.8 1003.5,1410.8 1006.6,1423.4 1009.8,1411.6 1012.9,1415.6 1016.1,1421.9 1019.2,1412.4 1022.4,1406.9 1024.8,1420.3 1027.9,1431.3 1030.3,1418.7 1034.2,1417.1 1036.6,1427.4 1039.7,1428.2 1042.1,1419.5 1045.3,1420.3 1048.4,1416.3 1052.4,1427.4 1054.7,1437.6 1057.9,1426.6 1062.6,1423.4 1066.5,1415.6 1070.5,1414.0 1071.9,1417.1 1075.6,1398.2 1078.2,1424.2 1081.4,1405.3 1084.6,1415.6 1087.7,1422.7 1093.2,1407.7 1097.2,1409.3 1099.5,1405.3 1102.7,1414.0 1106.6,1406.1 1109.8,1388.8 1112.1,1368.3 1113.7,1362.8 1118.4,1362.0 1120.8,1349.4 1123.2,1322.6 1126.3,1333.6 1129.5,1339.1 1132.6,1322.6 1135.8,1314.7 1138.9,1308.4 1141.3,1296.6 1144.5,1339.9 1147.6,1336.7 1150.0,1304.4 1153.1,1338.3 1156.3,1343.8 1159.4,1330.4 1162.6,1324.1 1165.7,1317.8 1169.7,1322.6 1173.6,1337.5 1176.8,1319.4 1179.9,1316.3 1183.1,1305.2 1185.4,1317.8 1188.6,1337.5 1191.7,1327.3 1198.0,1315.5 1201.2,1328.9 1203.6,1321.0 1206.7,1321.8 1209.9,1314.7 1213.0,1327.3 1216.2,1330.4 1218.5,1310.7 1221.7,1321.0 1224.8,1347.8 1228.0,1332.0 1230.4,1300.5 1233.5,1316.3 1237.5,1322.6 1241.4,1346.2 1246.1,1369.8 1250.8,1380.9 1255.6,1391.9 1257.2,1415.6 1263.5,1401.4 1268.2,1415.6 1272.9,1428.2 1276.9,1421.9 1280.8,1416.3 1285.5,1418.7 1290.3,1414.0 1293.4,1411.6 1296.6,1421.1 1299.7,1415.6 1304.4,1421.9 1309.2,1424.2 1313.9,1418.7 1316.4,1418.6 1320.7,1421.1 1323.3,1434.9 1328.5,1409.1 1331.1,1421.1 1334.5,1427.2 1338.8,1422.9 1341.4,1422.9 1344.0,1411.7 1348.3,1410.8 1350.0,1394.5 1354.3,1394.5 1356.0,1412.5 1359.5,1397.0 1362.9,1376.4 1364.6,1367.8 1368.9,1366.9 1372.4,1352.3 1376.7,1343.7 1379.3,1345.4 1381.8,1341.1 1387.0,1338.5 1389.6,1326.5 1392.2,1319.6 1394.8,1333.4 1397.3,1323.0 1400.8,1333.4 1403.4,1308.4 1406.8,1342.0 1411.1,1329.9 1415.4,1319.6 1418.0,1325.6 1421.4,1313.6 1424.9,1345.4 1430.0,1311.0 1433.5,1337.7 1436.9,1329.9 1440.4,1329.9 1442.1,1340.2 1446.4,1331.6 1449.0,1308.4 1453.3,1326.5 1456.7,1328.2 1460.2,1325.6 1464.5,1342.0 1469.6,1328.2 1473.1,1329.1 1477.4,1339.4 1481.7,1346.3 1486.8,1316.1 1490.3,1331.6 1492.9,1326.5 1495.4,1359.2 1499.7,1362.6 1502.3,1373.8 1505.8,1373.8 1509.2,1391.9 1510.9,1409.9 1514.4,1395.3 1519.5,1426.3 1522.1,1411.7 1526.4,1428.9 1529.9,1411.7 1534.2,1424.6 1537.6,1411.7 1541.1,1432.3 1544.5,1414.3 1548.8,1407.4 1553.1,1395.3 1555.7,1425.4 1560.0,1427.2 1564.3,1419.4 1567.7,1410.8 1571.2,1433.2 1576.3,1416.8 1581.5,1419.4" fill="none" stroke="#a0a03c" stroke-width="1.2" stroke-linejoin="round"/>
<text x="1190.5" y="1500.5" font-family="'Liberation Sans', sans-serif" font-size="15.3" fill="#9a9a9a" opacity="0.55">Активация Windows</text>
<text x="1190.5" y="1517.5" font-family="'Liberation Sans', sans-serif" font-size="11.1" fill="#9a9a9a" opacity="0.7">Чтобы активировать Windows, перейдите в раздел "Параметры".</text>
<text x="3" y="1543.2" font-family="'Liberation Sans', sans-serif" font-size="9" fill="#1a1a1a">Зонд:</text>
<rect x="35.5" y="1527.2" width="73.7" height="32.799999999999955" fill="#fdfdfd"/>
<text x="44.5" y="1548.7" font-family="'Liberation Sans', sans-serif" font-size="11.5" fill="#9a9a9a">10</text>
<path d="M92.10000000000001,1537.7 L95.9,1534.2 L99.7,1537.7 Z M92.10000000000001,1541.4 L95.9,1545.4 L99.7,1541.4 Z" fill="#8a8a8a"/>
<text x="124.7" y="1543.7" font-family="'Liberation Sans', sans-serif" font-size="9.5" fill="#161616">Смещение:</text>
<text x="124.7" y="1556.7" font-family="'Liberation Sans', sans-serif" font-size="9.5" letter-spacing="0.6" fill="#161616">225391 мкс</text>
<rect x="207.3" y="1539.3" width="1377.7" height="8.0" rx="2" fill="#ececec"/>
<rect x="909.0" y="1536.0" width="15" height="15" rx="2.5" fill="#ff0000" stroke="#ff9a9a" stroke-width="1"/>
<rect x="914.8" y="1539.5" width="1" height="8" fill="#ffd0d0"/><rect x="917.2" y="1539.5" width="1" height="8" fill="#ffd0d0"/>
</g>
<rect x="0" y="0" width="1586" height="1" fill="#cfc8cf"/>
<rect x="0" y="0" width="1" height="1554" fill="#c4c4c4"/>
<rect x="1585" y="0" width="1" height="1554" fill="#c4c4c4"/>
<rect x="0" y="1553" width="1586" height="1" fill="#c4c4c4"/>
</svg>
</body></html>
